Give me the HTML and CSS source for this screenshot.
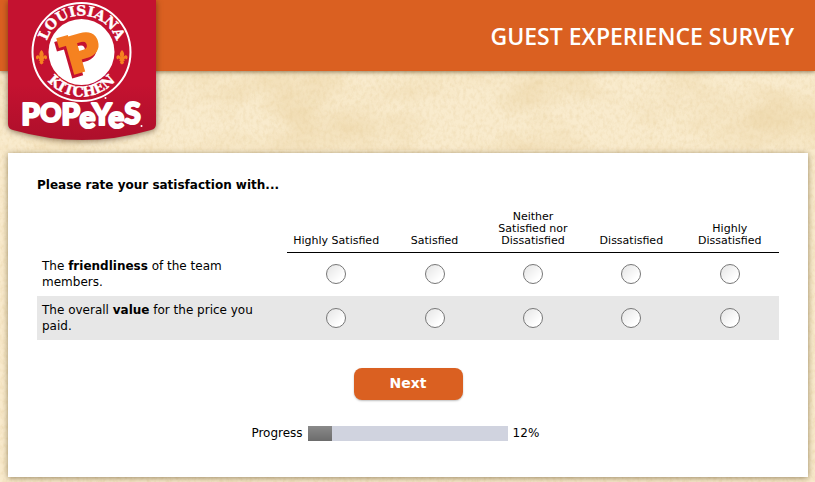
FILE: index.html
```html
<!DOCTYPE html>
<html lang="en">
<head>
<meta charset="utf-8">
<meta name="viewport" content="width=device-width, initial-scale=1">
<title>Guest Experience Survey</title>
<link rel="stylesheet" href="styles.css">
</head>
<body>
<svg class="paper" aria-hidden="true">
  <defs>
    <filter id="grain" x="0" y="0" width="100%" height="100%">
      <feTurbulence type="fractalNoise" baseFrequency="0.3 0.2" numOctaves="3" seed="4"/>
      <feColorMatrix values="0 0 0 0 0.78  0 0 0 0 0.6  0 0 0 0 0.32  0 0.7 0 0 -0.28"/>
    </filter>
    <filter id="stains" x="0" y="0" width="100%" height="100%">
      <feTurbulence type="fractalNoise" baseFrequency="0.012 0.02" numOctaves="6" seed="7"/>
      <feColorMatrix values="0 0 0 0 0.85  0 0 0 0 0.68  0 0 0 0 0.4  0 2 0 0 -0.75"/>
    </filter>
  </defs>
  <rect class="stains" width="100%" height="150" filter="url(#stains)"/>
  <rect width="100%" height="100%" filter="url(#grain)"/>
</svg>
<header class="masthead">
  <div class="bar">
    <a class="brand" href="#" aria-label="Popeyes Louisiana Kitchen">
      <svg class="logo" width="160" height="150" viewBox="0 0 160 150" aria-hidden="true">
        <defs>
          <linearGradient id="flag" x1="0" y1="0" x2="0" y2="1">
            <stop offset="0" stop-color="#c41230"/>
            <stop offset="0.6" stop-color="#c41230"/>
            <stop offset="1" stop-color="#ae0f2b"/>
          </linearGradient>
          <path id="arc-top" d="M41 52a36 36 0 0 1 73 0"/>
          <path id="arc-bottom" d="M33 52a44 44 0 0 0 89 0"/>
          <path id="lily" d="M0-7C2-5 3-3 1.500 0C3-3 6-2 5.500 1C5 3 3 2.500 3.500 1L2 2.500L3 3.500L1.500 4L2 6L0 7.500L-2 6L-1.500 4L-3 3.500L-2 2.500L-3.500 1C-3 2.500-5 3-5.500 1C-6-2-3-3-1.500 0C-3-3-2-5 0-7Z"/>
        </defs>
        <path class="flag" fill="url(#flag)" d="M4 0H152V124Q152 129 147 130Q78 150 9 130Q4 129 4 124Z"/>
        <circle cx="77.500" cy="52" r="49" fill="none" stroke="#fff" stroke-width="2"/>
        <circle cx="77.500" cy="52" r="33" fill="#fff"/>
        <text class="ring"><textPath href="#arc-top" startOffset="50%">LOUISIANA</textPath></text>
        <text class="ring"><textPath href="#arc-bottom" startOffset="50%">KITCHEN</textPath></text>
        <use href="#lily" x="37.500" y="57" fill="#f58220"/>
        <use href="#lily" x="118" y="57" fill="#f58220"/>
        <g transform="rotate(-16 77 52)">
          <g class="mark-shade">
            <text class="mark" x="76" y="74">P</text>
            <rect x="55" y="36" width="10" height="8"/>
          </g>
          <g class="mark-face">
            <text class="mark" x="79" y="71">P</text>
            <rect x="58" y="33" width="10" height="8"/>
          </g>
        </g>
        <text class="word" x="77" y="125">P<tspan class="small" dy="-3">O</tspan><tspan dy="3">P</tspan><tspan dy="3">e</tspan><tspan dy="-3">Y</tspan><tspan dy="3">e</tspan><tspan dy="-4">S</tspan></text>
        <circle cx="137.500" cy="126" r="1" fill="#fff"/>
        <circle cx="101.500" cy="98" r="1" fill="#fff"/>
      </svg>
    </a>
    <h1 class="title">GUEST EXPERIENCE SURVEY</h1>
  </div>
</header>
<main class="card">
  <form class="survey" action="#">
    <h2 class="question" id="question">Please rate your satisfaction with...</h2>
    <table class="ratings" aria-labelledby="question">
      <thead>
        <tr>
          <td class="corner"></td>
          <th scope="col" id="c1">Highly Satisfied</th>
          <th scope="col" id="c2">Satisfied</th>
          <th scope="col" id="c3">Neither Satisfied nor Dissatisfied</th>
          <th scope="col" id="c4">Dissatisfied</th>
          <th scope="col" id="c5">Highly Dissatisfied</th>
        </tr>
      </thead>
      <tbody>
        <tr>
          <th scope="row" id="r1">The <b>friendliness</b> of the team members.</th>
          <td><input type="radio" name="friendliness" value="5" aria-labelledby="r1 c1"></td>
          <td><input type="radio" name="friendliness" value="4" aria-labelledby="r1 c2"></td>
          <td><input type="radio" name="friendliness" value="3" aria-labelledby="r1 c3"></td>
          <td><input type="radio" name="friendliness" value="2" aria-labelledby="r1 c4"></td>
          <td><input type="radio" name="friendliness" value="1" aria-labelledby="r1 c5"></td>
        </tr>
        <tr>
          <th scope="row" id="r2">The overall <b>value</b> for the price you paid.</th>
          <td><input type="radio" name="value" value="5" aria-labelledby="r2 c1"></td>
          <td><input type="radio" name="value" value="4" aria-labelledby="r2 c2"></td>
          <td><input type="radio" name="value" value="3" aria-labelledby="r2 c3"></td>
          <td><input type="radio" name="value" value="2" aria-labelledby="r2 c4"></td>
          <td><input type="radio" name="value" value="1" aria-labelledby="r2 c5"></td>
        </tr>
      </tbody>
    </table>
    <button class="next" type="submit">Next</button>
    <div class="status">
      <label for="progress">Progress</label>
      <progress id="progress" value="12" max="100">12%</progress>
      <span class="percent">12%</span>
    </div>
  </form>
</main>
</body>
</html>
```
FILE: styles.css
```css
* { box-sizing: border-box; }

body {
  margin: 0;
  background: #f9ebcd;
  color: #000;
  font: 12px/16px Verdana, "DejaVu Sans", sans-serif;
}

.paper {
  position: absolute;
  inset: 0;
  z-index: -1;
  width: 100%;
  height: 100%;
}

.stains { opacity: 0.8; }

.masthead { padding-bottom: 82px; }

.bar {
  display: flex;
  align-items: center;
  justify-content: space-between;
  height: 71px;
  padding: 0 21px 0 4px;
  background: #da6021;
  box-shadow: 0 1px 4px rgba(70, 50, 20, 0.6);
}

.brand {
  align-self: flex-start;
  height: 71px;
}

.logo {
  display: block;
  overflow: visible;
}

.flag { filter: drop-shadow(0 1px 3px rgba(60, 30, 10, 0.6)); }

.ring {
  fill: #fff;
  stroke: #fff;
  stroke-width: 0.4px;
  font: bold 14px "DejaVu Serif", serif;
  text-anchor: middle;
}

.mark {
  font: bold 50px "DejaVu Sans", sans-serif;
  text-anchor: middle;
}

.mark-face {
  fill: #f58220;
  stroke: #f58220;
  stroke-width: 2px;
}

.mark-shade {
  fill: #c41230;
  stroke: #c41230;
  stroke-width: 2px;
}

.word {
  fill: #fff;
  stroke: #fff;
  stroke-width: 2px;
  stroke-linejoin: round;
  font: 900 30px Lato, sans-serif;
  text-anchor: middle;
}

.word .small { font-size: 26px; }

.title {
  margin: 0;
  color: #fff;
  font: 600 23px/32px "Open Sans", sans-serif;
}

.card {
  margin: 0 7px 6px 8px;
  padding: 24px 29px 36px;
  background: #fff;
  box-shadow: 0 1px 6px rgba(90, 70, 30, 0.6);
}

.survey {
  display: flex;
  flex-direction: column;
  align-items: center;
}

.question {
  align-self: stretch;
  margin: 0 0 18px;
  font-size: 12px;
  line-height: 16px;
}

.ratings {
  width: 100%;
  table-layout: fixed;
  border-collapse: collapse;
}

.corner { width: 250px; }

thead th {
  padding: 0 5px 5px;
  box-shadow: 0 1px #000;
  font-size: 11px;
  font-weight: normal;
  line-height: 12px;
  vertical-align: bottom;
}

tbody th {
  padding: 6px 10px 6px 5px;
  font-weight: normal;
  text-align: left;
}

tbody td {
  padding: 0;
  text-align: center;
  vertical-align: middle;
}

tbody tr:nth-child(even) { background: #e7e7e7; }

input[type="radio"] {
  appearance: none;
  display: block;
  width: 20px;
  height: 20px;
  margin: 0 auto;
  border: 1px solid #777;
  border-radius: 50%;
  background: linear-gradient(135deg, #e4e4e4, #fff 75%);
}

input[type="radio"]:checked { background: radial-gradient(#444 35%, #fff 40%); }

.next {
  width: 109px;
  height: 32px;
  margin: 28px 0 25px;
  padding: 0 0 2px;
  border: 0;
  border-radius: 8px;
  background: #da6021;
  box-shadow: 0 1px 2px rgba(0, 0, 0, 0.25);
  color: #fff;
  font: bold 14px/16px Verdana, "DejaVu Sans", sans-serif;
  cursor: pointer;
}

.status {
  display: flex;
  align-items: center;
  gap: 5px;
}

progress {
  appearance: none;
  width: 200px;
  height: 15px;
  border: 0;
  background: #d0d3df;
}

progress::-webkit-progress-bar { background: #d0d3df; }

progress::-webkit-progress-value { background: linear-gradient(#8a8a8a, #6c6c6c); }

.percent { min-width: 52px; }
```
